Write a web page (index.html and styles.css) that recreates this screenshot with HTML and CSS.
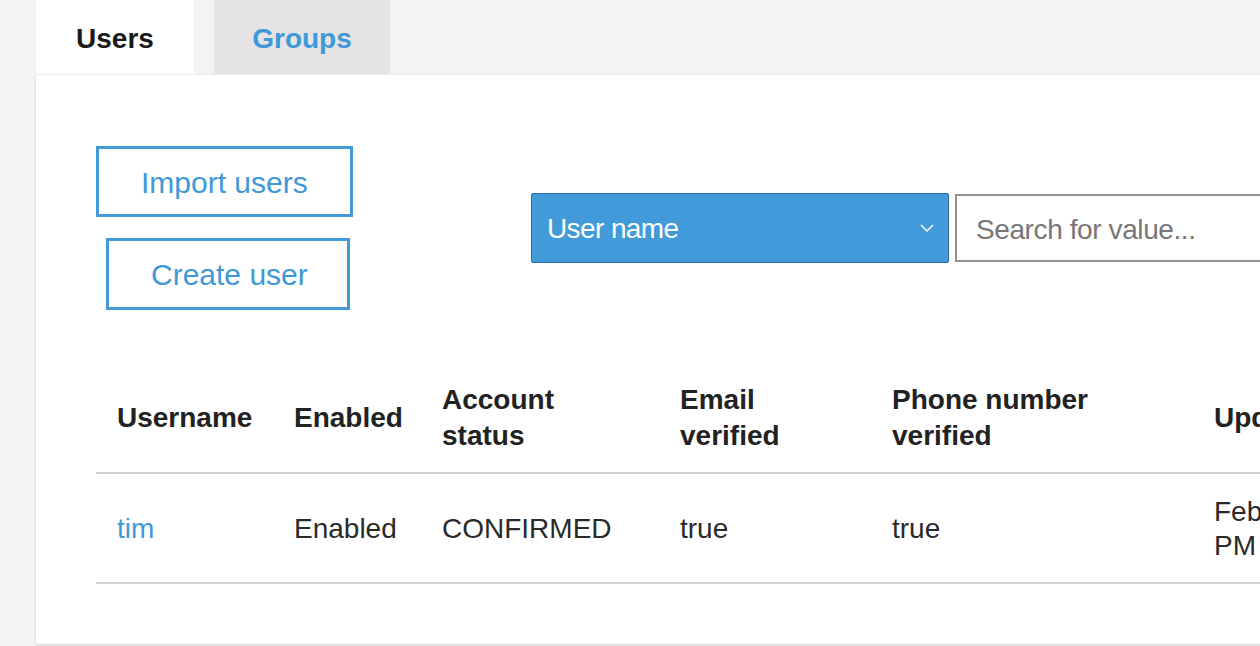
FILE: index.html
```html
<!DOCTYPE html>
<html lang="en">
<head>
<meta charset="utf-8">
<title>Users</title>
<link rel="stylesheet" href="styles.css">
</head>
<body>
<div class="page">
  <nav class="tabs">
    <div class="tab tab-active">Users</div>
    <div class="tab tab-inactive">Groups</div>
  </nav>
  <section class="panel">
    <div class="toolbar">
      <div class="actions">
        <button class="btn">Import users</button>
        <button class="btn btn-create">Create user</button>
      </div>
      <div class="search">
        <div class="select">
          <span>User name</span>
          <svg class="chev" width="14" height="8" viewBox="0 0 14 8"><polyline points="1,1 7,7 13,1" fill="none" stroke="#fff" stroke-width="1.4"/></svg>
        </div>
        <div class="input"><span class="placeholder">Search for value...</span></div>
      </div>
    </div>
    <table class="users">
      <colgroup>
        <col class="c1"><col class="c2"><col class="c3"><col class="c4"><col class="c5"><col class="c6">
      </colgroup>
      <thead>
        <tr>
          <th>Username</th>
          <th>Enabled</th>
          <th>Account status</th>
          <th>Email verified</th>
          <th>Phone number verified</th>
          <th>Updated</th>
        </tr>
      </thead>
      <tbody>
        <tr>
          <td><a class="link" href="#">tim</a></td>
          <td>Enabled</td>
          <td>CONFIRMED</td>
          <td>true</td>
          <td>true</td>
          <td>Feb 14, 2018 12:03:45 PM</td>
        </tr>
      </tbody>
    </table>
  </section>
</div>
</body>
</html>
```
FILE: styles.css
```css
html, body {
  margin: 0;
  padding: 0;
  height: 100%;
  overflow: hidden;
  background: #f2f3f3;
  font-family: "Liberation Sans", Arial, Helvetica, sans-serif;
  color: #222;
}

.page {
  padding-left: 36px;
  width: 1600px;
}

.tabs {
  display: flex;
  gap: 20px;
  height: 74px;
}

.tab {
  display: flex;
  align-items: center;
  justify-content: center;
  font-weight: bold;
  font-size: 28px;
  height: 74px;
  box-sizing: border-box;
  padding-top: 4px;
}

.tab-active {
  width: 158px;
  background: #fff;
  color: #1a1a1a;
}

.tab-inactive {
  width: 176px;
  background: #e5e3e4;
  color: #3f98d8;
  border-radius: 0 0 2px 2px;
}

.panel {
  margin-top: 1px;
  background: #fff;
  height: 569px;
  box-sizing: border-box;
  padding: 71px 0 0 60px;
  box-shadow: 0 1px 3px rgba(0, 0, 0, 0.14), 0 0 1px rgba(0, 0, 0, 0.08);
  border-radius: 2px;
}

.toolbar {
  display: flex;
  align-items: center;
}

.actions {
  display: flex;
  flex-direction: column;
  align-items: flex-start;
  gap: 21px;
  width: 257px;
}

.btn {
  font-family: "Liberation Sans", Arial, Helvetica, sans-serif;
  font-size: 30px;
  color: #3f98d8;
  background: #fff;
  border: 3px solid #429ad8;
  padding: 3px 42px 0;
  height: 71px;
  cursor: pointer;
}

.btn-create {
  margin-left: 10px;
  height: 72px;
  padding: 2px 39px 0 42px;
}

.search {
  display: flex;
  align-items: center;
  gap: 6px;
  margin-left: 178px;
}

.select {
  box-sizing: border-box;
  width: 418px;
  height: 70px;
  background: #429ad8;
  border: 1px solid #2c6aa4;
  border-radius: 2px;
  color: #fff;
  font-size: 28px;
  letter-spacing: -0.6px;
  display: flex;
  align-items: center;
  justify-content: space-between;
  padding: 2px 14px 0 15px;
}

.chev {
  display: block;
  margin-top: -2px;
}

.input {
  box-sizing: border-box;
  width: 400px;
  height: 68px;
  border: 2px solid #8f9396;
  display: flex;
  align-items: center;
  padding: 3px 0 0 19px;
}

.placeholder {
  font-size: 28px;
  color: #777;
  letter-spacing: -0.4px;
}

.users {
  margin-top: 54px;
  border-collapse: collapse;
  table-layout: fixed;
  width: 1439px;
}

.c1 { width: 177px; }
.c2 { width: 148px; }
.c3 { width: 238px; }
.c4 { width: 212px; }
.c5 { width: 322px; }
.c6 { width: 342px; }

.users th {
  text-align: left;
  vertical-align: middle;
  font-size: 28px;
  font-weight: bold;
  line-height: 36px;
  color: #222;
  padding: 18px 21px;
  border-bottom: 2px solid #cfcfcf;
}

.users td {
  text-align: left;
  vertical-align: middle;
  font-size: 28px;
  line-height: 34px;
  color: #2a2a2a;
  padding: 21px 21px 19px;
  border-bottom: 2px solid #d3d3d3;
}

.link {
  color: #3f98d8;
  text-decoration: none;
}
```
